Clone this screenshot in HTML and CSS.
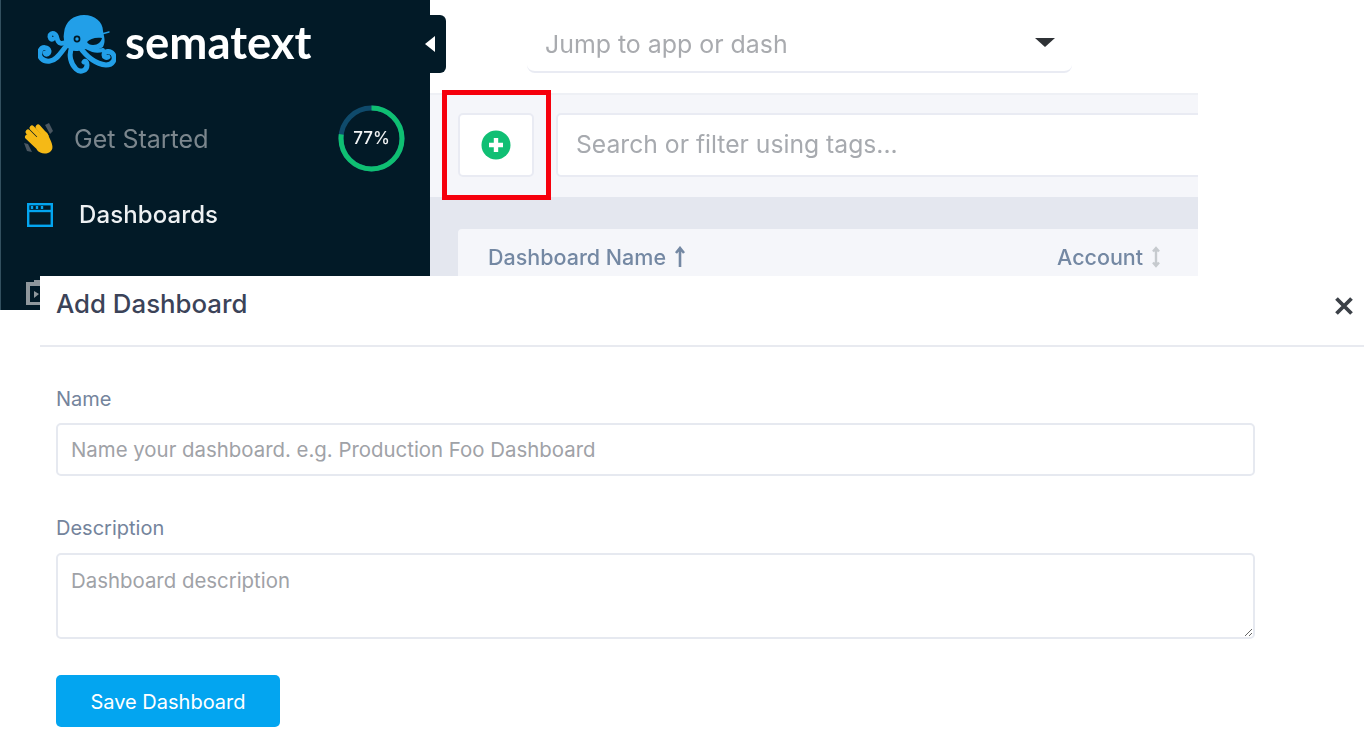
FILE: index.html
```html
<!DOCTYPE html>
<html lang="en">
<head>
<meta charset="utf-8">
<title>Add Dashboard</title>
<link rel="stylesheet" href="styles.css">
</head>
<body>
<div class="stage">
  <div class="app">
    <aside class="sidebar">
      <div class="brand">
        <svg class="octopus" viewBox="38 14 78 60" width="78" height="60" aria-hidden="true">
          <g fill="none" stroke="#229fe8" stroke-linecap="round" stroke-linejoin="round">
            <path stroke-width="4.600" d="M68 41C62 45 58 44 57 38C56 33 52 32 50 35C49 38 51 40 53 39"/>
            <path stroke-width="5" d="M68 44C62 50 58 60 50 61C43 62 38 57 40 51C42 46 48 47 49 51C49 54 46 55 45 53"/>
            <path stroke-width="5" d="M72 47C68 55 71 64 76 69C80 73 87 71 87 65C87 62 85 60 84 62"/>
            <path stroke-width="5" d="M79 46C86 56 96 64 106 65C113 65 116 59 113 54C110 50 104 51 104 55C104 57 106 58 108 57"/>
            <path stroke-width="4" d="M84 45C90 50 95 52 103 50"/>
            <path stroke-width="1.500" d="M97 36C101 34 104 33 109 32"/>
          </g>
          <path fill="#229fe8" d="M64 33C65 21 74 15 84 15C95 15 103 22 103 31C104 37 106 41 103 47C97 51 90 50 84 49C78 52 71 52 67 47C64 42 63 38 64 33Z"/>
          <circle cx="77" cy="39" r="3.400" fill="#021a27"/>
          <circle cx="77" cy="39" r="1.700" fill="#229fe8"/>
          <path fill="#021a27" d="M87 42C90 39 95 37 102 38C101 42 98 45 93 45C90 45 88 44 87 42Z"/>
        </svg>
        <span class="wordmark">sematext</span>
      </div>
      <nav class="nav">
        <div class="nav-row muted">
          <svg class="clap" viewBox="0 0 30 32" width="30" height="32" aria-hidden="true">
            <path d="M21 2L25 0L29 8L26 11Z M0 20L4 21L8 29L3 28Z" fill="#4a5660"/>
            <g stroke="#f5b916" stroke-width="5" stroke-linecap="round">
              <path d="M3.500 14L13 23"/>
              <path d="M4 9L15 20"/>
              <path d="M8 5L19 16"/>
              <path d="M14 4L22 13"/>
            </g>
            <path fill="#f5b916" d="M9 17L20 8C23 9 24 11 25 14C28 20 30 25 27 28C23 32 16 31 13 27Z"/>
          </svg>
          <span class="nav-label">Get Started</span>
          <svg class="ring" viewBox="0 0 67 67" width="67" height="67" aria-hidden="true">
            <circle cx="33.500" cy="33.500" r="30.500" fill="none" stroke="#0f4a6b" stroke-width="5"/>
            <circle cx="33.500" cy="33.500" r="30.500" fill="none" stroke="#0fbf72" stroke-width="5" stroke-dasharray="147.600 44" transform="rotate(-90 33.500 33.500)"/>
          </svg>
          <span class="ring-label">77%</span>
        </div>
        <div class="nav-row active">
          <svg class="dash-icon" viewBox="0 0 26 24" width="26" height="24" aria-hidden="true">
            <rect x="1.200" y="1.200" width="23.600" height="21.600" fill="none" stroke="#03a5f0" stroke-width="2.400"/>
            <path d="M1 8H25" stroke="#03a5f0" stroke-width="2.400"/>
            <path d="M5 3V6M10 3V6M15 3V6" stroke="#03a5f0" stroke-width="2.400"/>
          </svg>
          <span class="nav-label">Dashboards</span>
        </div>
        <div class="nav-row">
          <svg class="report-icon" viewBox="0 0 26 26" width="26" height="26" aria-hidden="true">
            <path d="M8 1H18V4H8Z" fill="#8f979c"/>
            <rect x="2" y="5" width="22" height="20" fill="none" stroke="#8f979c" stroke-width="4"/>
            <path d="M8 12L13 15L8 19Z" fill="#8f979c"/>
          </svg>
        </div>
      </nav>
      <div class="collapse-tab"><span class="collapse-arrow"></span></div>
    </aside>
    <main class="main">
      <header class="topbar">
        <div class="jump">
          <span class="jump-text">Jump to app or dash</span>
          <span class="caret"></span>
        </div>
      </header>
      <section class="toolbar">
        <div class="add-btn">
          <svg viewBox="0 0 30 30" width="30" height="30" aria-hidden="true">
            <circle cx="15" cy="15" r="14.500" fill="#10bf74"/>
            <path d="M15 8V22M8 15H22" stroke="#fff" stroke-width="4.400"/>
          </svg>
        </div>
        <div class="search">Search or filter using tags...</div>
      </section>
      <section class="content">
        <div class="table-head">
          <span class="col-name">Dashboard Name</span>
          <svg class="sort" viewBox="0 0 12 22" width="12" height="22" aria-hidden="true">
            <path d="M6 21V3M2 7L6 2L10 7" fill="none" stroke="#7488a3" stroke-width="2.600"/>
          </svg>
          <span class="col-account">Account</span>
          <svg class="sort sort-idle" viewBox="0 0 12 22" width="12" height="22" aria-hidden="true">
            <path d="M6 3V19M3 5.500L6 2L9 5.500M3 16.500L6 20L9 16.500" fill="none" stroke="#c6cace" stroke-width="2.400"/>
          </svg>
        </div>
      </section>
    </main>
  </div>
  <div class="highlight"></div>
  <section class="modal">
    <header class="modal-head">
      <h2 class="modal-title">Add Dashboard</h2>
      <svg class="close" viewBox="0 0 18 18" width="18" height="18" aria-hidden="true">
        <path d="M1.500 1.500L16.500 16.500M16.500 1.500L1.500 16.500" stroke="#3c4148" stroke-width="3.800"/>
      </svg>
    </header>
    <form class="modal-body">
      <label class="field-label" for="dash-name">Name</label>
      <input class="field-input" id="dash-name" type="text" placeholder="Name your dashboard. e.g. Production Foo Dashboard">
      <label class="field-label second" for="dash-desc">Description</label>
      <textarea class="field-area" id="dash-desc" placeholder="Dashboard description"></textarea>
      <button class="save" type="button">Save Dashboard</button>
    </form>
  </section>
</div>
</body>
</html>
```
FILE: styles.css
```css
* { box-sizing: border-box; }
html, body { margin: 0; padding: 0; background: #fff; }
body { font-family: Inter, "Liberation Sans", sans-serif; overflow: hidden; }
.stage { position: relative; width: 1364px; height: 756px; overflow: hidden; background: #fff; }

.app { display: flex; width: 1198px; height: 310px; filter: blur(0.4px); }
.sidebar { position: relative; width: 430px; flex: none; background: #021a27; border-left: 1px solid #33505f; color: #fff; }
.brand { display: flex; align-items: flex-start; height: 101px; padding: 14px 0 0 37px; }
.octopus { flex: none; }
.wordmark { margin: -2px 0 0 9px; font-family: Lato, sans-serif; font-weight: 700; font-size: 45.500px; line-height: 60px; color: #fff; }
.nav-row { position: relative; display: flex; align-items: center; height: 76px; padding-left: 23px; }
.nav-label { font-size: 24px; line-height: 30px; }
.muted .nav-label { margin-left: 20px; font-size: 25px; color: #7b868d; }
.active .nav-label { margin-left: 26px; letter-spacing: 0.1px; font-weight: 500; color: #eef1f3; }
.clap { flex: none; }
.dash-icon { flex: none; margin: -1px 0 0 3px; }
.report-icon { flex: none; margin: 0 0 -1px 2px; }
.ring { position: absolute; left: 337px; top: 4px; }
.ring-label { position: absolute; left: 337px; top: 4px; width: 67px; line-height: 66px; text-align: center; font-size: 17px; font-weight: 500; color: #f1f3f4; }
.collapse-tab { position: absolute; left: 428px; top: 15px; width: 17px; height: 58px; background: #021a27; border-radius: 0 6px 6px 0; }
.collapse-arrow { position: absolute; left: -4px; top: 21px; border-style: solid; border-width: 8px 10px 8px 0; border-color: transparent #fff transparent transparent; }

.main { flex: 1; min-width: 0; display: flex; flex-direction: column; overflow: hidden; }
.topbar { height: 93px; flex: none; padding: 15px 0 0 97px; background: #fff; }
.jump { display: flex; align-items: center; justify-content: space-between; width: 545px; height: 58px; padding: 1px 17px 0 18px; border-bottom: 2px solid #e9ebf3; border-radius: 0 0 8px 8px; }
.jump-text { font-size: 24.900px; color: #a9abaf; }
.caret { border-style: solid; border-width: 9px 10px 0 10px; border-color: #2f3236 transparent transparent transparent; margin-top: -3px; }
.toolbar { display: flex; align-items: flex-start; gap: 22px; height: 104px; flex: none; padding: 18px 0 0 28px; background: #f5f6fa; border-top: 2px solid #eef0f5; }
.add-btn { display: flex; align-items: center; justify-content: center; flex: none; width: 76px; height: 64px; background: #fff; border: 2px solid #e9ebf3; border-radius: 5px; }
.search { flex: 1; height: 64px; margin-right: -8px; padding-left: 18px; background: #fff; border: 2px solid #e9ebf3; border-radius: 5px; font-size: 24.700px; line-height: 59px; color: #a7aaaf; white-space: nowrap; }
.content { flex: 1; padding: 32px 0 0 28px; background: #e4e7ef; }
.table-head { display: flex; align-items: center; height: 60px; padding: 0 0 4px 30px; background: #f5f6fa; border-radius: 4px 0 0 0; color: #7488a3; font-size: 21.500px; font-weight: 500; }
.col-name { flex: none; }
.sort { flex: none; margin-left: 8px; }
.sort-idle { margin-left: 7px; }
.col-account { margin-left: 371px; }

.highlight { position: absolute; left: 442px; top: 90px; width: 109px; height: 110px; border: 5px solid #f6000c; }

.modal { position: absolute; left: 40px; top: 276px; width: 1324px; height: 480px; background: #fff; }
.modal-head { display: flex; align-items: center; justify-content: space-between; height: 71px; padding: 0 11px 0 16px; border-bottom: 2px solid #e8eaf0; }
.modal-title { margin: 0 0 14px; font-size: 25.800px; font-weight: 500; color: #3b4358; }
.close { margin-bottom: 10px; }
.modal-body { display: flex; flex-direction: column; align-items: flex-start; padding: 41px 0 0 16px; }
.field-label { height: 22px; margin-bottom: 13px; font-size: 20px; line-height: 22px; font-weight: 400; color: #74849c; }
.field-label.second { margin-top: 41px; margin-bottom: 14px; }
.field-input, .field-area { display: block; width: 1199px; padding: 0 13px; background: #fff; border: 2px solid #e6e9f0; border-radius: 5px; font-family: Inter, sans-serif; font-size: 20.400px; color: #333; outline: none; }
.field-input { height: 53px; }
.field-area { height: 86px; padding-top: 14px; line-height: 24px; }
.field-input::placeholder, .field-area::placeholder { color: #9fa2a7; opacity: 1; }
.save { width: 224px; height: 52px; margin-top: 36px; padding: 2px 0 0 0; background: #03a5f0; border: 0; border-radius: 5px; font-family: Inter, sans-serif; font-size: 20px; font-weight: 400; color: #fff; }
```
